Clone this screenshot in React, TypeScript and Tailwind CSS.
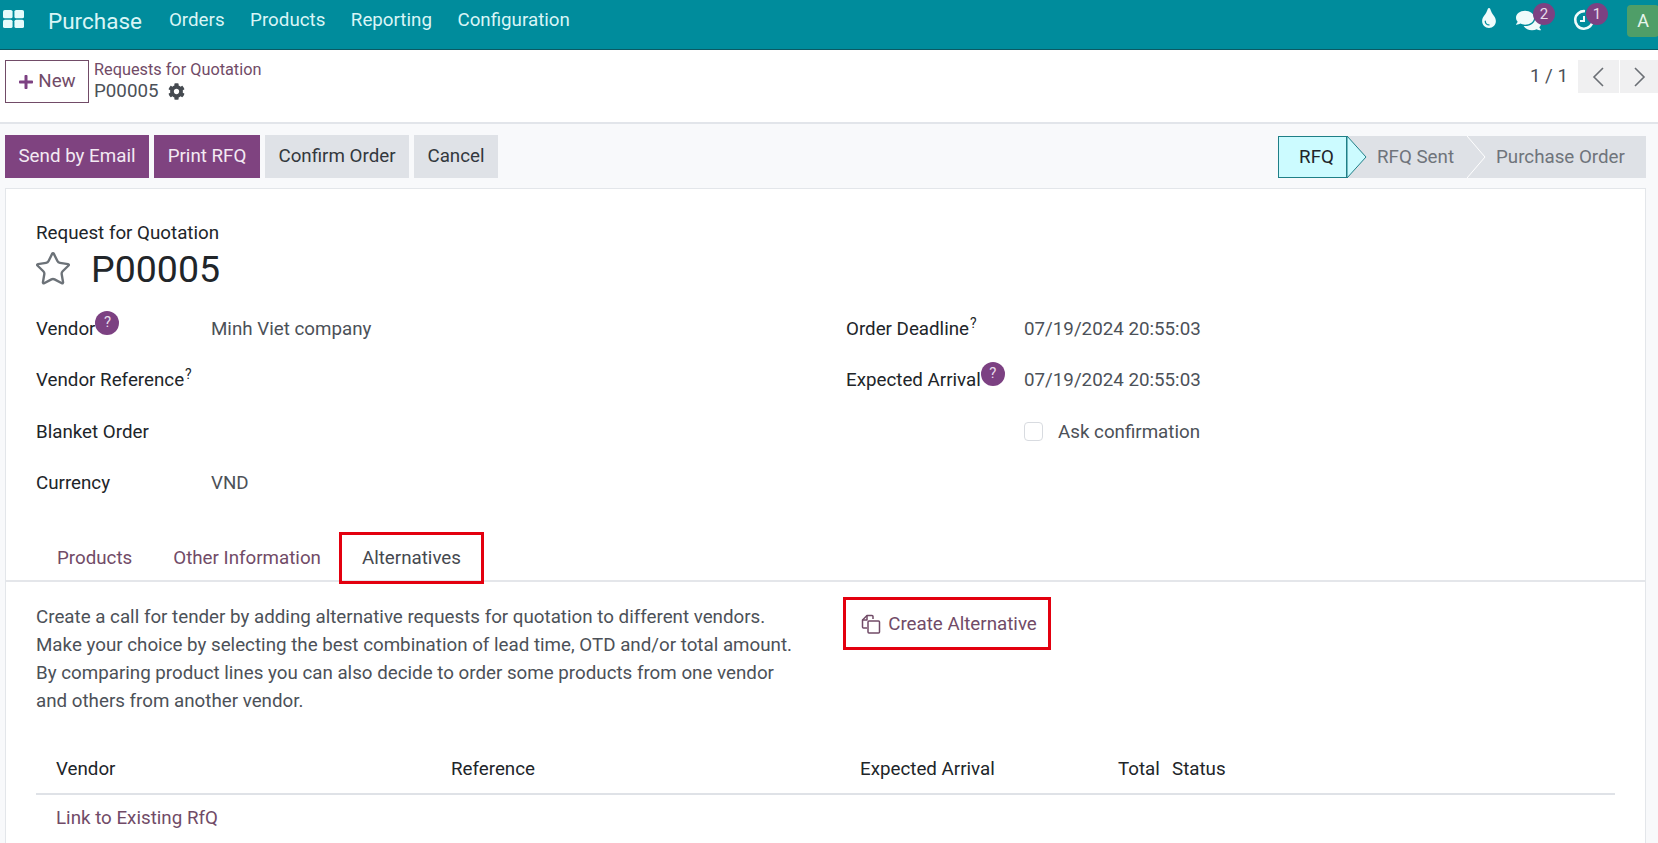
import React from "react";
import { FaComments, FaCog, FaPlus, FaTint } from "react-icons/fa";
import { Star } from "lucide-react";

function Help() {
  return (
    <span className="relative -top-[6px] flex h-[24px] w-[24px] shrink-0 items-center justify-center rounded-full bg-[#7c4182] pb-[2px] text-[15px] text-[#e8dcea]">?</span>
  );
}

function Sup() {
  return <sup className="relative -top-[6px] ml-[1px] text-[14px] leading-none">?</sup>;
}

function Field({ label, value, w }: { label: React.ReactNode; value?: React.ReactNode; w: string }) {
  return (
    <div className="flex h-[51.5px] items-center">
      <div className={`flex items-center text-[#212529] ${w}`}>{label}</div>
      <div className="text-[#4c5158]">{value}</div>
    </div>
  );
}

export default function App() {
  return (
    <div className="h-[843px] w-[1658px] overflow-hidden bg-[#f8f9fb] text-[18.75px] leading-[28px] [font-family:Roboto,sans-serif]">
      {/* Navbar */}
      <div className="flex h-[50px] items-center border-b border-[#0b5a64] bg-[#008c9c] text-[#d9f5f6]">
        <svg width="21" height="18" viewBox="0 0 18 18" preserveAspectRatio="none" className="relative -top-[6px] ml-[3px]" fill="#e6fbfb">
          <rect x="0" y="0" width="8.2" height="8.2" rx="1.5" />
          <rect x="9.8" y="0" width="8.2" height="8.2" rx="1.5" />
          <rect x="0" y="9.8" width="8.2" height="8.2" rx="1.5" />
          <rect x="9.8" y="9.8" width="8.2" height="8.2" rx="1.5" />
        </svg>
        <span className="relative -top-[4px] ml-[24px] text-[22.5px]">Purchase</span>
        <div className="relative -top-[5px] ml-[27px] flex gap-[25.5px]">
          <span>Orders</span>
          <span>Products</span>
          <span>Reporting</span>
          <span>Configuration</span>
        </div>
        <div className="relative ml-auto flex h-full w-[177px] shrink-0 items-center">
          <FaTint className="absolute -left-[2px] top-[8px] text-[20px] text-[#f0fbfb]" />
          <FaComments className="absolute left-[35px] top-[8px] text-[25px] text-[#f0fbfb]" />
          <span className="absolute left-[52px] top-[3px] flex h-[22px] w-[22px] items-center justify-center rounded-full bg-[#7c4182] text-[15px] text-[#e8dcea]">2</span>
          <svg width="22" height="22" viewBox="0 0 22 22" className="absolute left-[92px] top-[9px]" fill="none" stroke="#f0fbfb" strokeWidth="2.6">
            <path d="M12 2.2A8.8 8.8 0 1 0 19.8 11" />
            <path d="M11 7v5H7" strokeWidth="2" />
          </svg>
          <span className="absolute left-[105px] top-[3px] flex h-[22px] w-[22px] items-center justify-center rounded-full bg-[#7c4182] text-[15px] text-[#e8dcea]">1</span>
          <span className="absolute left-[146px] top-[5px] flex h-[32px] w-[32px] items-center justify-center rounded-[4px] bg-[#4f9e68] text-[18px] text-[#e8f5ec]">A</span>
        </div>
      </div>

      {/* Control panel */}
      <div className="flex h-[74px] border-b-2 border-[#e2e5ea] bg-white">
        <div className="ml-[5px] mt-[10px] flex h-[43px] w-[84px] items-center justify-center gap-[4px] border border-[#714b67] pb-[2px] text-[#714b67]">
          <FaPlus className="mt-[2px] text-[16px] text-[#7c4182]" />
          <span>New</span>
        </div>
        <div className="ml-[5px] mt-[7px] flex flex-col">
          <span className="text-[16.3px] leading-[26px] text-[#714b67]">Requests for Quotation</span>
          <div className="-mt-[4px] flex items-center gap-[9px] text-[#4c5158]">
            <span className="leading-[24px]">P00005</span>
            <FaCog className="text-[17px] text-[#454a50]" />
          </div>
        </div>
        <div className="ml-auto mt-[10px] flex h-[33px] items-center">
          <span className="mr-[10px] pb-[2px] text-[#4c5158]">1 / 1</span>
          <div className="flex h-[33px] w-[41px] items-center justify-center bg-[#f0f0f1]">
            <svg width="13" height="20" viewBox="0 0 13 20" fill="none" stroke="#6b6f75" strokeWidth="1.6"><path d="M11 1 2 10l9 9" /></svg>
          </div>
          <div className="ml-[1px] flex h-[33px] w-[38px] items-center justify-center bg-[#f0f0f1]">
            <svg width="13" height="20" viewBox="0 0 13 20" fill="none" stroke="#6b6f75" strokeWidth="1.6"><path d="m2 1 9 9-9 9" /></svg>
          </div>
        </div>
      </div>

      {/* Action bar */}
      <div className="flex h-[64px] items-start pl-[5px] pt-[11px]">
        <div className="flex gap-[5px]">
          <span className="flex h-[43px] w-[144px] items-center justify-center bg-[#7f4380] pb-[2px] text-[#f3eaf3]">Send by Email</span>
          <span className="flex h-[43px] w-[106px] items-center justify-center bg-[#7f4380] pb-[2px] text-[#f3eaf3]">Print RFQ</span>
          <span className="flex h-[43px] w-[144px] items-center justify-center bg-[#dfe2e7] pb-[2px] text-[#33383e]">Confirm Order</span>
          <span className="flex h-[43px] w-[84px] items-center justify-center bg-[#dfe2e7] pb-[2px] text-[#33383e]">Cancel</span>
        </div>
        <div className="relative ml-auto mr-[12px] mt-[1px] flex h-[42px] w-[368px]">
          <span className="flex h-[42px] w-[69px] items-center justify-center border border-[#1f7f87] bg-[#ccfbff] pl-[8px] text-[#212529]">RFQ</span>
          <div className="relative flex flex-1 items-center bg-[#dee1e6] text-[#6f747b]">
            <span className="absolute left-[30px]">RFQ Sent</span>
            <span className="absolute left-[149px]">Purchase Order</span>
            <svg width="22" height="42" viewBox="0 0 22 42" className="absolute left-0 top-0">
              <path d="M0 0 19 21 0 42Z" fill="#ccfbff" stroke="#1f7f87" strokeWidth="1" />
            </svg>
            <svg width="22" height="42" viewBox="0 0 22 42" className="absolute left-[120px] top-0" fill="none" stroke="#ffffff" strokeWidth="1">
              <path d="M0 0 18 21 0 42" />
            </svg>
          </div>
        </div>
      </div>

      {/* Sheet */}
      <div className="ml-[5px] mr-[12px] h-[700px] border border-[#e3e6ea] bg-white">
        <div className="pl-[30px] pt-[30px]">
          <div className="text-[#212529]">Request for Quotation</div>
          <div className="-mt-[1px] flex h-[46px] items-center">
            <Star size={38} strokeWidth={1.5} className="-ml-[2px] text-[#6c7278]" />
            <span className="ml-[19px] text-[37.5px] leading-[46px] text-[#212529]">P00005</span>
          </div>
          <div className="mt-[11px] flex">
            <div className="w-[810px]">
              <Field w="w-[175px]" label={<>Vendor<Help /></>} value="Minh Viet company" />
              <Field w="w-[175px]" label={<>Vendor Reference<Sup /></>} />
              <Field w="w-[175px]" label="Blanket Order" />
              <Field w="w-[175px]" label="Currency" value="VND" />
            </div>
            <div>
              <Field w="w-[178px]" label={<>Order Deadline<Sup /></>} value="07/19/2024 20:55:03" />
              <Field w="w-[178px]" label={<>Expected Arrival<Help /></>} value="07/19/2024 20:55:03" />
              <div className="flex h-[51.5px] items-center pl-[178px] text-[#4c5158]">
                <span className="h-[19px] w-[19px] rounded-[4px] border border-[#d8dbe0] bg-white" />
                <span className="ml-[15px]">Ask confirmation</span>
              </div>
            </div>
          </div>
        </div>

        {/* Tabs */}
        <div className="mt-[22.8px] flex h-[50px] items-start border-b-2 border-[#e4e6ea] pl-[46px]">
          <div className="flex h-[52px] shrink-0 items-center">
            <span className="px-[5px] text-[#714b67]">Products</span>
            <span className="ml-[36px] text-[#714b67]">Other Information</span>
            <span className="ml-[18px] flex h-[52px] w-[145px] items-center justify-center border-[3px] border-[#e3000f] text-[#45494f]">Alternatives</span>
          </div>
        </div>

        <div className="flex pl-[30px] pt-[21px]">
          <div className="w-[810px] text-[#4c5158]">
            <div className="leading-[28.2px]">Create a call for tender by adding alternative requests for quotation to different vendors.</div>
            <div className="leading-[28.2px]">Make your choice by selecting the best combination of lead time, OTD and/or total amount.</div>
            <div className="leading-[28.2px]">By comparing product lines you can also decide to order some products from one vendor</div>
            <div className="leading-[28.2px]">and others from another vendor.</div>
          </div>
          <div className="relative -left-[3px] -top-[6px] flex h-[53px] w-[208px] items-center justify-center gap-[7px] border-[3px] border-[#e3000f] pl-[4px] pt-[2px] text-[#714b67]">
            <svg width="20" height="20" viewBox="0 0 20 20" fill="none" stroke="#714b67" strokeWidth="1.5" strokeLinejoin="round">
              <path d="M6 14H2.5a1 1 0 0 1-1-1V6L6 1.5h5a1 1 0 0 1 1 1V5" />
              <path d="M8 7h9.5a1 1 0 0 1 1 1v10a1 1 0 0 1-1 1H8a1 1 0 0 1-1-1V8a1 1 0 0 1 1-1Z" />
              <path d="M1.5 6H6V1.5" />
            </svg>
            <span>Create Alternative</span>
          </div>
        </div>

        {/* Table */}
        <div className="mx-[30px] mt-[29px]">
          <div className="flex h-[50px] items-center border-b-2 border-[#dfe2e7] pl-[20px] text-[#212529]">
            <span className="w-[395px]">Vendor</span>
            <span className="w-[409px]">Reference</span>
            <span className="w-[258px]">Expected Arrival</span>
            <span className="w-[54px]">Total</span>
            <span>Status</span>
          </div>
          <div className="flex h-[46px] items-center pl-[20px] text-[#714b67]">Link to Existing RfQ</div>
        </div>
      </div>
    </div>
  );
}
